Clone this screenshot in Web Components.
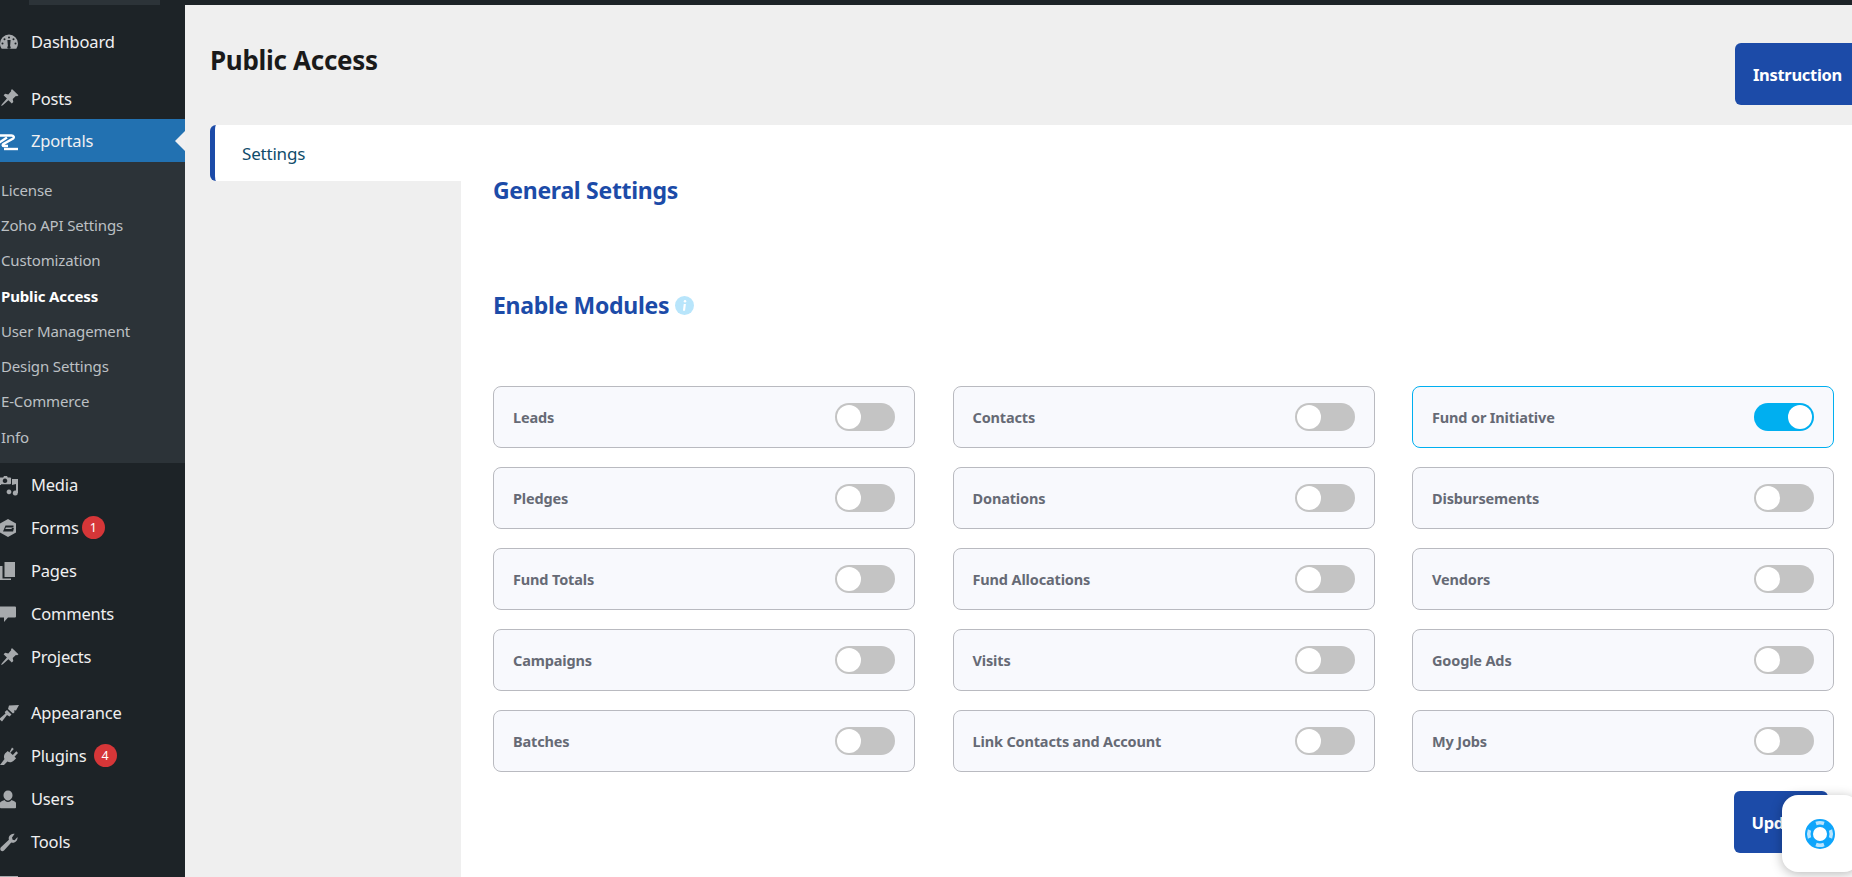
<!DOCTYPE html>
<html lang="en"><head><meta charset="utf-8"><title>Public Access</title>
<style>
html,body{margin:0;height:877px;overflow:hidden;background:#fff;font-family:"Noto Sans","Open Sans",sans-serif}
body{display:flex;flex-direction:column;width:1852px}
app-content{flex:1;min-height:0}
</style></head><body>
<top-bar></top-bar>
<app-content>
  <wp-sidebar slot="side">
    <wp-item icon="dashboard" style="margin-top:15px;margin-bottom:14px">Dashboard</wp-item>
    <wp-item icon="pin" h="42">Posts</wp-item>
    <wp-item icon="z" current>Zportals</wp-item>
    <wp-sub>
      <wp-subitem>License</wp-subitem>
      <wp-subitem>Zoho API Settings</wp-subitem>
      <wp-subitem>Customization</wp-subitem>
      <wp-subitem active>Public Access</wp-subitem>
      <wp-subitem>User Management</wp-subitem>
      <wp-subitem>Design Settings</wp-subitem>
      <wp-subitem>E-Commerce</wp-subitem>
      <wp-subitem>Info</wp-subitem>
    </wp-sub>
    <wp-item icon="media">Media</wp-item>
    <wp-item icon="forms" badge="1" tight>Forms</wp-item>
    <wp-item icon="pages">Pages</wp-item>
    <wp-item icon="comments">Comments</wp-item>
    <wp-item icon="pin" style="margin-bottom:13px">Projects</wp-item>
    <wp-item icon="brush">Appearance</wp-item>
    <wp-item icon="plug" badge="4">Plugins</wp-item>
    <wp-item icon="user">Users</wp-item>
    <wp-item icon="wrench">Tools</wp-item>
    <wp-item icon="settings">Settings</wp-item>
  </wp-sidebar>
  <page-main slot="main">
    <page-head slot="head" title="Public Access"><blue-button>Instruction</blue-button></page-head>
    <tab-item slot="tabs">Settings</tab-item>
    <section-title>General Settings</section-title>
    <section-title info style="margin-top:85px">Enable Modules</section-title>
    <module-grid>
      <module-card>Leads</module-card><module-card>Contacts</module-card><module-card on>Fund or Initiative</module-card>
      <module-card>Pledges</module-card><module-card>Donations</module-card><module-card>Disbursements</module-card>
      <module-card>Fund Totals</module-card><module-card>Fund Allocations</module-card><module-card>Vendors</module-card>
      <module-card>Campaigns</module-card><module-card>Visits</module-card><module-card>Google Ads</module-card>
      <module-card>Batches</module-card><module-card>Link Contacts and Account</module-card><module-card>My Jobs</module-card>
    </module-grid>
    <form-actions><blue-button>Update</blue-button></form-actions>
  </page-main>
</app-content>
<help-widget></help-widget>
<script>
const ICONS={
dashboard:'<path fill-rule="evenodd" d="M10 2.5a9 9 0 0 0-9 9c0 2 .6 3.7 1.7 5.2h14.6A9 9 0 0 0 19 11.500a9 9 0 0 0-9-9zM10 4.500a1 1 0 1 1 0 2 1 1 0 0 1 0-2zM5.500 6.200a1 1 0 1 1 0 2 1 1 0 0 1 0-2zM14.500 6.200a1 1 0 1 1 0 2 1 1 0 0 1 0-2zM3.500 10.500a1 1 0 1 1 0 2 1 1 0 0 1 0-2zM16.500 10.500a1 1 0 1 1 0 2 1 1 0 0 1 0-2zM11.600 8l-.5 6a1.700 1.700 0 1 1-2.200 0l-.5-6z"/>',
pin:'<path d="M13.200 1.200l6.300 6-1.400 1.100-1.200-.4-3.200 3 .6 3.200-1.500 1.500-3.400-3.400-5.600 5.100-1.800.8.900-1.900 5-5.600-3.300-3.300 1.500-1.500 3.200.6 3-3.300-.4-1.200z"/>',
z:'<g fill="none" stroke="#fff" stroke-width="2.400"><path d="M-1 4.500h13.500c2.200 0 3 1.700 1.600 3L4.500 13c-1.200 1-1 2 .5 2H9"/><path d="M-1 12.500l9-6"/><path d="M5 18h14"/></g>',
media:'<path fill-rule="evenodd" d="M1 2.500h3.200L5 1h3l.8 1.500h2.400a1 1 0 0 1 .8 1.500v4.200a1 1 0 0 1-1 1H1zM6 3.500a2.300 2.300 0 1 0 .01 0z"/><path d="M13 4h6v14h-.2a2.500 2.500 0 1 1-1.800-2.400V9l-4 1zM10 14.500a2.400 2.400 0 1 1-.01 0z" /><path d="M-1 3h3v7h-3z"/>',
forms:'<path fill-rule="evenodd" d="M9 1l8 4.500v9L9 19l-8-4.500v-9zM6.500 7.500h8v2H7l-.8 1.600h6.300l.4-1h2l-.8 3.400H4z"/>',
pages:'<path d="M5.500 1H16v15H5.500z"/><path d="M1 5h2.500v12.500H12V19H1z"/>',
comments:'<path d="M1 2.500h15a1 1 0 0 1 1 1v9a1 1 0 0 1-1 1H9l-4 4.500v-4.500H1z"/>',
brush:'<path d="M10 2.500L20 2l-3 5.500-1.800-.3.300 2-1.500 1.300L9 6z"/><path d="M8 7l4.500 4.500-2 2L8 12l-5 6.500-3-2.500 6.500-5.500-.8-1.500z"/>',
plug:'<path d="M13 1.500l1.800 1.500-3.500 3.800 2.500 2.200 3.500-3.700 1.700 1.600-3.500 3.800 1.700 1.500-2.300 2.300c-2 2-4.500 2.200-6.500 1L5 19H1l4.500-6c-1-2-.6-4.300 1-6l2.300-2.100 1.600 1.500z"/>',
user:'<path d="M9 1.500a4.500 4.500 0 0 1 4.500 5c0 2.300-2 5-4.500 5s-4.500-2.700-4.500-5a4.500 4.500 0 0 1 4.500-5z"/><path d="M1 14c0-1.500 3.500-2.500 4.500-3 .8 1.200 2 2 3.500 2s2.700-.8 3.500-2c1 .5 4.500 1.500 4.500 3v4.500a.8.8 0 0 1-.8.8H1.800a.8.8 0 0 1-.8-.8z"/>',
wrench:'<path d="M18.500 5c.4 2.500-1 5-3.700 5.700-1 .2-1.800.1-2.500-.2L5 18.500c-1.500 1.200-3.300.6-3.700-1-.2-.8 0-1.500.6-2.200l8-7.500c-.3-1-.3-2 0-2.800.7-2.300 3.500-3.800 5.800-3.200L13 5.500l.6 2.200 2 .6z"/>',
settings:'<path d="M1 1h18v5H1zM1 8h18v11H1z"/>'
};
function def(name,html,cls){
  const t=document.createElement('template');t.innerHTML=html;
  customElements.define(name,class extends (cls||HTMLElement){
    constructor(){super();this.attachShadow({mode:'open'}).appendChild(t.content.cloneNode(true));}
    connectedCallback(){this.init&&this.init();}
  });
}
def('top-bar',`<style>:host{display:flex;height:5px;background:#1d2327;flex:none}i{display:block;margin-left:29px;width:131px;background:#2c3338}</style><i></i>`);
def('app-content',`<style>:host{display:flex;height:872px}</style><slot name="side"></slot><slot name="main"></slot>`);
def('wp-sidebar',`<style>:host{display:flex;flex-direction:column;flex:none;width:185px;background:#1d2327;overflow:hidden;height:872px}</style><slot></slot>`);
customElements.define('wp-item',class extends HTMLElement{
  constructor(){super();this.attachShadow({mode:'open'});}
  connectedCallback(){
    const cur=this.hasAttribute('current'),b=this.getAttribute('badge'),h=this.getAttribute('h')||43,ic=ICONS[this.getAttribute('icon')]||'';
    this.shadowRoot.innerHTML=`<style>
    :host{display:flex;align-items:center;flex:none;height:${h}px;position:relative;color:#f0f0f1;font-size:16.500px;letter-spacing:-.2px;background:${cur?'#2271b1':'transparent'}}
    svg{width:20px;height:20px;flex:none;margin-left:-1px;margin-right:12px;fill:#a7aaad;overflow:visible}
    .b{display:inline-flex;align-items:center;justify-content:center;width:23px;height:23px;border-radius:50%;background:#d63638;color:#fff;font-size:12.500px;letter-spacing:0;margin-left:${this.hasAttribute('tight')?'3':'7'}px}
    .a{position:absolute;right:0;top:50%;margin-top:-10px;border:10px solid transparent;border-right-color:#f0f0f1;border-left-width:0}
    </style><svg viewBox="0 0 20 20">${ic}</svg><span><slot></slot></span>${b?`<span class="b">${b}</span>`:''}${cur?'<i class="a"></i>':''}`;
  }
});
def('wp-sub',`<style>:host{display:flex;flex-direction:column;flex:none;background:#2c3338;height:301px;padding-top:10px;box-sizing:border-box}</style><slot></slot>`);
customElements.define('wp-subitem',class extends HTMLElement{
  constructor(){super();this.attachShadow({mode:'open'});}
  connectedCallback(){
    const a=this.hasAttribute('active');
    this.shadowRoot.innerHTML=`<style>:host{display:flex;align-items:center;height:35.300px;flex:none;padding-left:1px;font-size:15px;letter-spacing:-.15px;color:${a?'#fff':'#bcc0c4'};font-weight:${a?700:400}}</style><slot></slot>`;
  }
});
def('page-main',`<style>
:host{display:flex;flex-direction:column;flex:1;min-width:0;background:#efefef}
.body{display:flex;flex:1;min-height:0}
.tabs{width:276px;flex:none;padding-left:25px;box-sizing:border-box}
.panel{flex:1;background:#fff;padding:50px 18px 0 32px;min-width:0;box-sizing:border-box}
</style><slot name="head"></slot><div class="body"><div class="tabs"><slot name="tabs"></slot></div><div class="panel"><slot></slot></div></div>`);
customElements.define('page-head',class extends HTMLElement{
  constructor(){super();this.attachShadow({mode:'open'});}
  connectedCallback(){
    this.shadowRoot.innerHTML=`<style>:host{display:flex;justify-content:space-between;align-items:flex-start;height:120px;padding-left:25px;margin-right:-8px;flex:none}
    h1{margin:36px 0 0;font-size:26px;line-height:38px;font-weight:700;color:#1a1a1a;letter-spacing:-.3px}
    .r{margin-top:38px}</style><h1>${this.getAttribute('title')}</h1><div class="r"><slot></slot></div>`;
  }
});
def('blue-button',`<style>:host{display:inline-flex;align-items:center;height:62px;padding:0 18px;box-sizing:border-box;background:#1c4ba8;border-radius:6px;color:#fff;font-weight:700;font-size:16.500px;letter-spacing:-.3px}</style><slot></slot>`);
def('tab-item',`<style>:host{display:flex;align-items:center;height:56px;background:#fff;border-left:5px solid #1c4ba8;border-radius:6px 0 0 6px;padding-left:27px;font-size:17px;letter-spacing:-.2px;color:#0f4c6b}</style><slot></slot>`);
customElements.define('section-title',class extends HTMLElement{
  constructor(){super();this.attachShadow({mode:'open'});}
  connectedCallback(){
    this.shadowRoot.innerHTML=`<style>:host{display:flex;align-items:center;gap:6px;height:30px;font-size:23px;font-weight:700;color:#1c4ba8;letter-spacing:-.3px}
    svg{width:19px;height:19px}</style><span><slot></slot></span>${this.hasAttribute('info')?'<svg viewBox="0 0 18 18"><circle cx="9" cy="9" r="9" fill="#b8e5fb"/><circle cx="9.500" cy="5" r="1.200" fill="#fff"/><path d="M8.300 7.500h2l-.8 6.500h-2z" fill="#fff"/></svg>':''}`;
  }
});
def('module-grid',`<style>:host{display:grid;grid-template-columns:repeat(3,1fr);column-gap:37.500px;row-gap:19px;margin-top:66px}</style><slot></slot>`);
customElements.define('module-card',class extends HTMLElement{
  constructor(){super();this.attachShadow({mode:'open'});}
  connectedCallback(){
    const on=this.hasAttribute('on');
    this.shadowRoot.innerHTML=`<style>:host{display:flex;align-items:center;justify-content:space-between;height:62px;box-sizing:border-box;padding:0 19px;background:#f8f9fd;border:1px solid ${on?'#00aff0':'#b9bac0'};border-radius:8px;font-size:14.500px;font-weight:700;color:#666a75;letter-spacing:-.15px}</style><span><slot></slot></span><toggle-switch ${on?'on':''}></toggle-switch>`;
  }
});
customElements.define('toggle-switch',class extends HTMLElement{
  constructor(){super();this.attachShadow({mode:'open'});}
  connectedCallback(){
    const on=this.hasAttribute('on');
    this.shadowRoot.innerHTML=`<style>:host{display:flex;justify-content:${on?'flex-end':'flex-start'};align-items:center;width:60px;height:28px;box-sizing:border-box;padding:0 2px;border-radius:14px;background:${on?'#00aff0':'#c4c4c4'}}i{display:block;width:24px;height:24px;border-radius:50%;background:#fff}</style><i></i>`;
  }
});
def('form-actions',`<style>:host{display:flex;justify-content:flex-end;margin-top:19px;padding-right:6px}</style><slot></slot>`);
def('help-widget',`<style>:host{position:fixed;left:1782px;top:795px;width:78px;height:77px;background:#fff;border-radius:16px;box-shadow:0 2px 12px rgba(0,0,0,.28);display:flex;align-items:center;padding-left:23px;box-sizing:border-box}</style>
<svg width="30" height="30" viewBox="0 0 30 30"><circle cx="15" cy="15" r="11" fill="none" stroke="#0ea5fb" stroke-width="8"/><g stroke="#fff" stroke-width="3.500" fill="none"><path d="M11 3.500a12 12 0 0 1 8 0" transform="rotate(0 15 15) translate(0 1)" stroke="#b9e4fd"/><path d="M11 4.500a11 11 0 0 1 8 0" transform="rotate(90 15 15)" stroke="#b9e4fd"/><path d="M11 4.500a11 11 0 0 1 8 0" transform="rotate(180 15 15)" stroke="#b9e4fd"/><path d="M11 4.500a11 11 0 0 1 8 0" transform="rotate(270 15 15)" stroke="#b9e4fd"/></g></svg>`);
</script>
</body></html>
